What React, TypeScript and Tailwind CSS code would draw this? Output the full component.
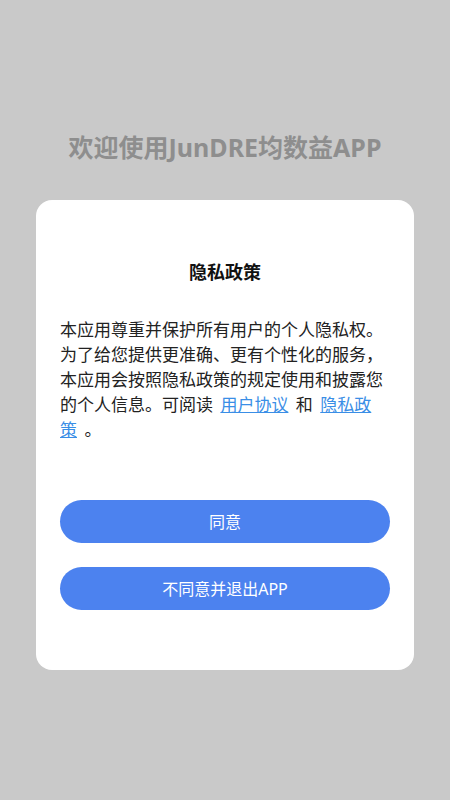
import React from 'react';

export default function App() {
  return (
    <div
      className="min-h-[800px] w-full bg-[#c9c9c9] flex flex-col items-center pt-[131px]"
      style={{ fontFamily: '"Noto Sans", "Noto Sans CJK SC", sans-serif' }}
    >
      <h1 className="text-[25px] leading-[32px] font-bold text-[#8e8e8e] text-center">
        欢迎使用JunDRE均数益APP
      </h1>

      <div className="mt-[37px] w-[378px] bg-white rounded-[16px] px-[24px] pt-[59px] pb-[60px]">
        <h2 className="text-[18px] leading-[26px] font-semibold text-[#111] text-center">隐私政策</h2>

        <p className="mt-[32px] w-[326px] text-[17px] leading-[25px] text-[#222]">
          本应用尊重并保护所有用户的个人隐私权。为了给您提供更准确、更有个性化的服务，本应用会按照隐私政策的规定使用和披露您的个人信息。可阅读{' '}
          <a className="mx-[3px] text-[#3a8ee6] underline">用户协议</a> 和{' '}
          <a className="mx-[3px] text-[#3a8ee6] underline">隐私政策</a> 。
        </p>

        <div className="mt-[58px] flex flex-col gap-[24px]">
          <button className="h-[43px] w-full rounded-full bg-[#4c82ef] text-white text-[16px]">同意</button>
          <button className="h-[43px] w-full rounded-full bg-[#4c82ef] text-white text-[16px]">不同意并退出APP</button>
        </div>
      </div>
    </div>
  );
}
